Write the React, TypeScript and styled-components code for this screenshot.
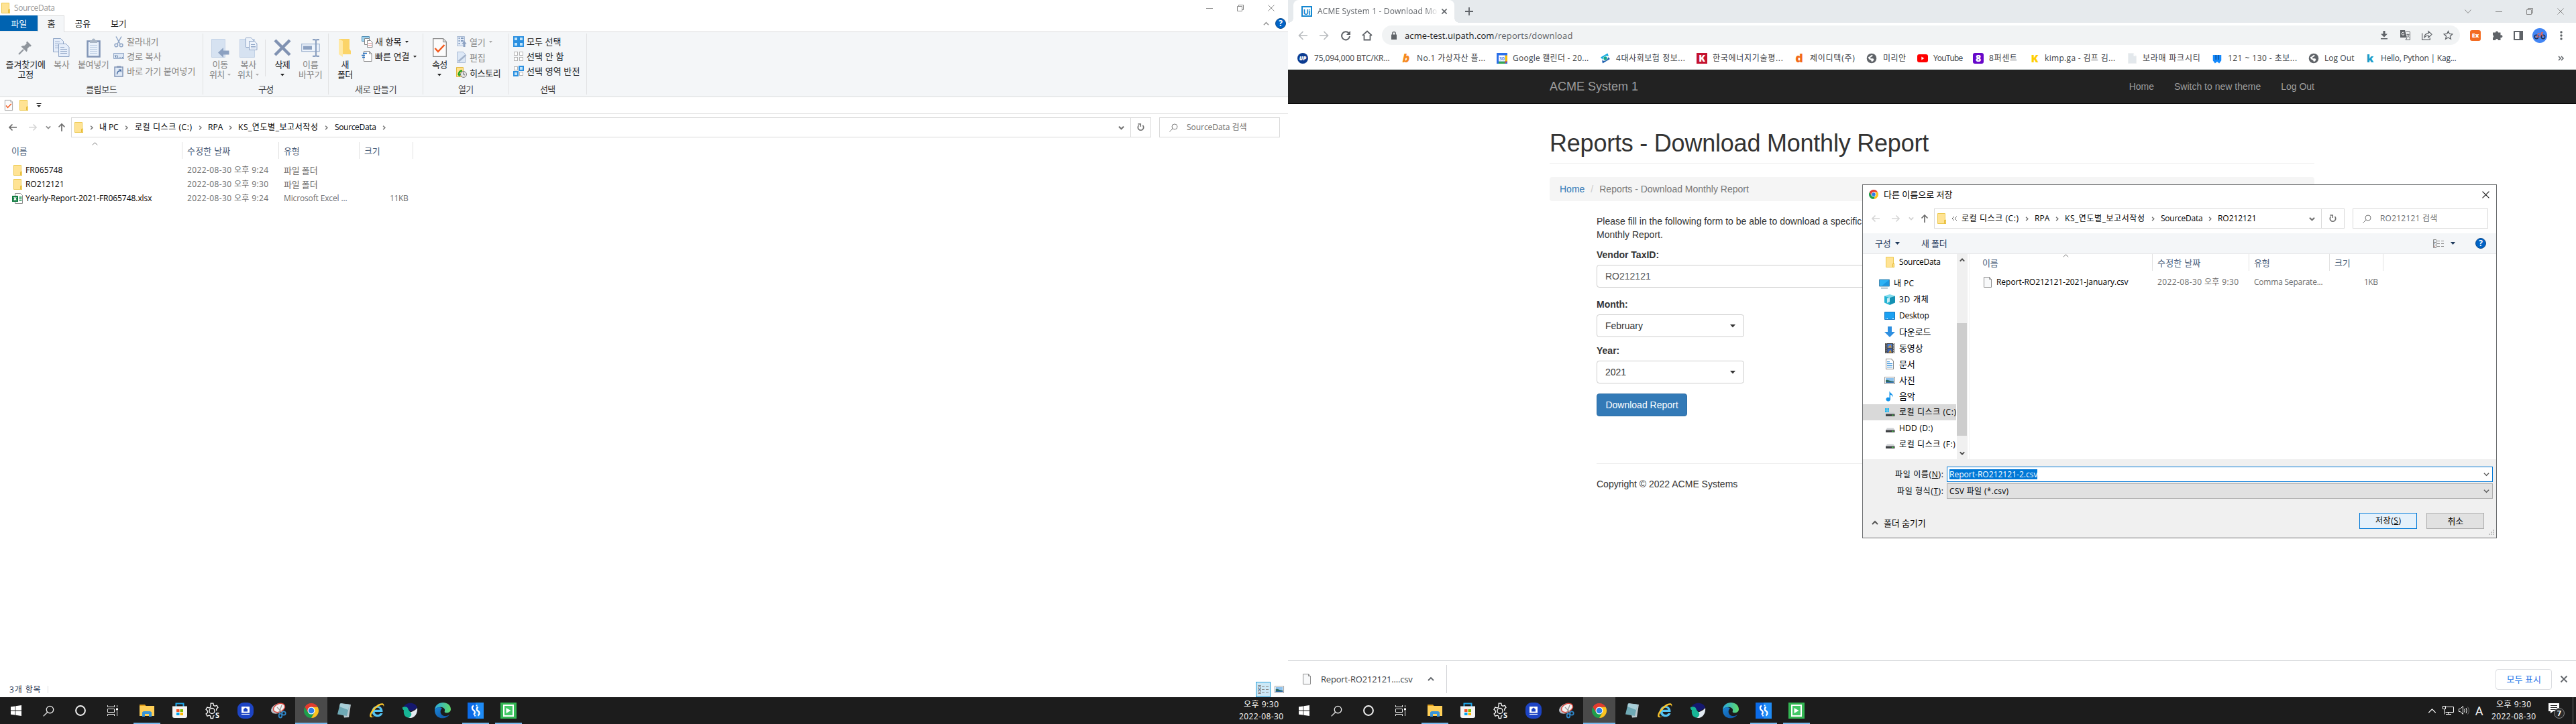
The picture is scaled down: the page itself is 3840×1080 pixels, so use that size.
import React, { useLayoutEffect, useRef, useState } from 'react';
import styled, { createGlobalStyle, css } from 'styled-components';

const GlobalStyle = createGlobalStyle`
  * { box-sizing: border-box; }
  body { margin: 0; background: #fff; overflow: hidden; }
  svg { display: block; flex: none; overflow: visible; }
`;

const UI_FONT = `'Open Sans', 'Noto Sans CJK KR', sans-serif`;
const WEB_FONT = `'Liberation Sans', Arial, sans-serif`;

/* ---------- text of a known width ---------- */

const LabelBox = styled.span<{ $w: number; $ml: number; $c?: string; $fs: number; $b?: boolean }>`
  flex: none;
  display: block;
  width: ${(p) => p.$w}px;
  margin-left: ${(p) => p.$ml}px;
  color: ${(p) => p.$c || 'inherit'};
  font-size: ${(p) => p.$fs}px;
  font-weight: ${(p) => (p.$b ? 600 : 400)};
  white-space: pre;
`;
const LabelInk = styled.span`
  display: inline-block;
  white-space: pre;
`;

type LabelProps = { w: number; ml?: number; c?: string; fs?: number; b?: boolean; children: React.ReactNode };

/** Spreads its text evenly so that it fills exactly `w` pixels. */
function Label({ w, ml = 0, c, fs, b, children }: LabelProps) {
  const ref = useRef<HTMLSpanElement>(null);
  const [spacing, setSpacing] = useState(0);
  const size = fs ?? (typeof children === 'string' && !/[A-Za-z0-9]/.test(children) ? 13 : 12);
  useLayoutEffect(() => {
    const el = ref.current!;
    const n = (el.textContent || '').length;
    el.style.letterSpacing = '0px';
    const s = (w + 0.5 - el.getBoundingClientRect().width) / n;
    el.style.letterSpacing = `${s}px`;
    setSpacing(s);
  }, [w, children]);
  return (
    <LabelBox $w={w} $ml={ml} $c={c} $fs={size} $b={b}>
      <LabelInk ref={ref} style={{ letterSpacing: spacing }}>{children}</LabelInk>
    </LabelBox>
  );
}

const Slot = styled.span<{ $w: number; $ml?: number; $mt?: number }>`
  flex: none;
  width: ${(p) => p.$w}px;
  margin-left: ${(p) => p.$ml || 0}px;
  margin-top: ${(p) => p.$mt || 0}px;
  display: flex;
  align-items: center;
  justify-content: center;
`;

/* ---------- small glyphs ---------- */

const Folder = ({ h = 16 }: { h?: number }) => (
  <svg width="13" height={h} viewBox="0 0 13 16" preserveAspectRatio="none">
    <path d="M.5.5h11v9.5h1v5.5H.5z" fill="#ffe394" stroke="#ecc94f" />
    <path d="M10.5 15.5v-5h2v5z" fill="#ffdf80" stroke="#e6bd3c" />
  </svg>
);
const Triangle = ({ c = '#222', w = 6 }: { c?: string; w?: number }) => (
  <svg width={w} height={w / 2 + 0.5} viewBox="0 0 6 3" preserveAspectRatio="none"><path d="M0 0h6L3 3z" fill={c} /></svg>
);
const Chevron = ({ dir = 'down', s = 8, c = '#777', sw = 1.6 }: { dir?: string; s?: number; c?: string; sw?: number }) => {
  const d: Record<string, string> = {
    down: 'M1 3l4 4 4-4', up: 'M1 7l4-4 4 4', right: 'M3 1l4 4-4 4',
  };
  return <svg width={s} height={s} viewBox="0 0 10 10"><path d={d[dir]} fill="none" stroke={c} strokeWidth={(sw * 10) / s} /></svg>;
};
const Arrow = ({ dir, c }: { dir: 'left' | 'right' | 'up'; c: string }) => {
  const rot = { left: 0, up: 90, right: 180 }[dir];
  return (
    <svg width="12" height="12" viewBox="0 0 12 12">
      <g transform={`rotate(${rot} 6 6)`} fill="none" stroke={c} strokeWidth="1.7"><path d="M1 6h11M5.5 1.5L1 6l4.500 4.500" /></g>
    </svg>
  );
};
const Minimize = ({ c = '#888' }) => <svg width="10" height="10" viewBox="0 0 10 10"><path d="M0 5.500h10" stroke={c} /></svg>;
const Restore = ({ c = '#888' }) => (
  <svg width="10" height="10" viewBox="0 0 10 10"><path d="M.5 2.500h7v7h-7zM2.500 2.500v-2h7v7h-2" fill="none" stroke={c} /></svg>
);
const Cross = ({ c = '#888', s = 10, sw = 1 }) => (
  <svg width={s} height={s} viewBox="0 0 10 10"><path d="M.5.5l9 9M9.500.5l-9 9" stroke={c} strokeWidth={sw} fill="none" /></svg>
);
const Help = () => (
  <svg width="16" height="16" viewBox="0 0 16 16">
    <circle cx="8" cy="8" r="7.500" fill="#0063c6" stroke="#114b88" />
    <text x="8" y="12.300" textAnchor="middle" fontFamily="Open Sans" fontWeight="700" fontSize="12" fill="#fff">?</text>
  </svg>
);
const Refresh = () => (
  <svg width="11" height="12" viewBox="0 0 11 12">
    <path d="M2.600 3A4.200 4.200 0 1 0 8.400 3" fill="none" stroke="#707070" strokeWidth="1.700" />
    <path d="M1.300 1h4v4" fill="none" stroke="#707070" strokeWidth="1.500" />
  </svg>
);
const Magnifier = ({ s = 13, c = '#777', sw = 1 }) => (
  <svg width={s} height={s} viewBox="0 0 13 13"><circle cx="8" cy="5" r="4" fill="none" stroke={c} strokeWidth={sw} /><path d="M5 8L.5 12.500" stroke={c} strokeWidth={sw} /></svg>
);
const Sheet = () => (
  <svg width="12" height="16" viewBox="0 0 12 16"><path d="M.5.5h8l3 3v12H.5z" fill="#f8f9fa" stroke="#8c8c8c" /><path d="M8.500.5v3h3" fill="none" stroke="#8c8c8c" /></svg>
);
const CheckSheet = ({ w, h }: { w: number; h: number }) => (
  <svg width={w} height={h} viewBox="0 0 21 28">
    <path d="M.7.7h15l4.600 4.600v22H.7z" fill="#fcfcfc" stroke="#8a8a8a" strokeWidth="1.300" />
    <path d="M15.500.7v5h5" fill="#ddd" stroke="#8a8a8a" />
    <path d="M3.500 15l4.500 5L17.500 10" fill="none" stroke="#f2591c" strokeWidth="2.500" />
  </svg>
);
const Details = ({ c = '#888' }) => (
  <svg width="16" height="13" viewBox="0 0 16 13">
    <path d="M.5.5h4v12h-4zM.5 4.500h4M.5 8.500h4" fill="none" stroke={c} />
    <path d="M6 2.500h4M12 2.500h4M6 6.500h4M12 6.500h4M6 10.500h4M12 10.500h4" stroke={c} />
    <path d="M2 2.500h1M2 6.500h1" stroke="#3c78c0" /><path d="M2 10.500h1" stroke="#c03c3c" />
  </svg>
);
const Picture = ({ w = 16, h = 11 }) => (
  <svg width={w} height={h} viewBox="0 0 16 11" preserveAspectRatio="none">
    <path d="M.5.5h15v10H.5z" fill="#fff" stroke="#999" /><path d="M2 2h12v7H2z" fill="#8fc3ee" />
    <path d="M2 5c4-1 6 2 12 2v2H2z" fill="#2f6a63" /><path d="M2 8h12v1H2z" fill="#2d6aa8" />
  </svg>
);
const ChromeLogo = ({ s, h = s }: { s: number; h?: number }) => (
  <svg width={s} height={h} viewBox="0 0 48 48">
    <path d="M13.600 30L3.200 12A24 24 0 0 0 24 48l10.400-18z" fill="#1e9e4a" />
    <path d="M34.400 30L24 48A24 24 0 0 0 44.800 12H24z" fill="#fcc31e" />
    <path d="M13.600 30L3.200 12a24 24 0 0 1 41.600 0H24z" fill="#e33b2e" />
    <circle cx="24" cy="24" r="12" fill="#fff" /><circle cx="24" cy="24" r="9.500" fill="#2b7de9" />
  </svg>
);

/* ---------- ribbon icons ---------- */

const BLUE = '#8fa5c6';
const Pin = () => (
  <svg width="22" height="22" viewBox="0 0 22 22">
    <path d="M13.500 1.500l6.500 6.500-1.500 1.500-1.500-.3-3.300 3.500c.4 2-.1 3.600-1.200 4.600L4.500 9.500c1.500-1.300 3-1.600 4.700-1.200L12.700 5l-.5-2z" fill="#8f959c" />
    <path d="M8 14L1 21" stroke="#8f959c" strokeWidth="2.200" />
  </svg>
);
const SheetPair = () => (
  <svg width="25" height="28" viewBox="0 0 25 28" fill="#e6eefa" stroke={BLUE}>
    <path d="M.5.5h11l4 4v16H.5z" /><path d="M3 5.500h7M3 8.500h9M3 11.500h9M3 14.500h9" />
    <path d="M8.500 8.500h11l4.500 4.500v14.500H8.500z" /><path d="M11 13.500h6M11 16.500h10M11 19.500h10M11 22.500h10" />
  </svg>
);
const Clipboard = () => (
  <svg width="21" height="29" viewBox="0 0 21 29">
    <path d="M1.500 4.500h18v23h-18z" fill="#e9f1fb" stroke="#8195b6" strokeWidth="2.500" />
    <path d="M5 3h3a2.500 2.500 0 0 1 5 0h3v4H5z" fill="#a9b6c6" />
    <path d="M5 10.500h11M5 13.500h11M5 16.500h11M5 19.500h11M5 22.500h11" stroke="#b9cbe2" />
  </svg>
);
const Scissors = () => (
  <svg width="14" height="17" viewBox="0 0 14 17" fill="none" stroke="#8fa5c6" strokeWidth="1.500">
    <path d="M3 .5l6 11M11 .5l-6 11" /><circle cx="3.300" cy="13.500" r="2.300" /><circle cx="10.700" cy="13.500" r="2.300" />
  </svg>
);
const PathIcon = () => (
  <svg width="16" height="10" viewBox="0 0 16 10"><path d="M.5.5h15v8h-15z" fill="#dfe9f6" stroke={BLUE} /><path d="M2.500 3l1.500 4M5 3l1.500 4M8 6.500h1M10.500 6.500h1M13 6.500h1" stroke="#46658f" /></svg>
);
const ShortcutIcon = () => (
  <svg width="14" height="17" viewBox="0 0 14 17"><path d="M1 2h12v14H1z" fill="#dfe9f6" stroke="#8195b6" strokeWidth="1.500" /><path d="M4 .5h6v2.500H4z" fill="#8195b6" /><path d="M4.500 13c0-4 1.500-5 4-5" fill="none" stroke="#4a6da0" strokeWidth="1.500" /><path d="M6.500 5.500H11V10z" fill="#4a6da0" /></svg>
);
const MoveTo = () => (
  <svg width="27" height="29" viewBox="0 0 27 29"><path d="M.5 1.500h20v27h-20z" fill="#d6e2f1" stroke="#c3d2e6" /><path d="M10 21.500l8-7.500v4.500h8.500v6H18V29z" fill="#8ca1c1" /></svg>
);
const CopyTo = () => (
  <svg width="27" height="30" viewBox="0 0 27 30"><path d="M.5 2.500h22v27H.5z" fill="#d6e2f1" stroke="#c3d2e6" /><g fill="#edf3fb" stroke={BLUE}><path d="M9.500.5h8l3 3v11h-11z" /><path d="M14.500 5.500h8l3.500 3.500v9.500H14.500z" /><path d="M17 10.500h6M17 13.500h7M17 15.500h7" /></g></svg>
);
const DeleteIcon = () => (
  <svg width="26" height="26" viewBox="0 0 26 26"><path d="M2 2l22 22M24 2L2 24" stroke="#8092b2" strokeWidth="4.500" /></svg>
);
const Rename = () => (
  <svg width="28" height="27" viewBox="0 0 28 27"><path d="M.7 7.700h26.500v11H.7z" fill="#eef4fc" stroke="#a5b8d3" strokeWidth="1.300" /><path d="M3 10.500h13v5.500H3z" fill="#8ca1c1" /><path d="M17 1.200h3.500l1.500 1 1.500-1H27M22 2v23M17 25.800h3.500l1.500-1 1.500 1H27" stroke="#8ca1c1" strokeWidth="2.200" fill="none" /></svg>
);
const BigFolder = () => (
  <svg width="20" height="28" viewBox="0 0 20 28"><path d="M1 1h16v15l2 3v5H1z" fill="#fbd468" /><path d="M1 1l6 3v24L1 24z" fill="#ffe9a6" /></svg>
);
const NewItem = () => (
  <svg width="17" height="17" viewBox="0 0 17 17"><path d="M.5.5h11v7H.5z" fill="#9fd3ee" stroke="#4d8bb3" /><path d="M4.500 3.500h7v9h-7z" fill="#fff" stroke="#888" /><path d="M8.500 6.500h5l2.500 2.500v7.500H8.500z" fill="#fff" stroke="#888" /><path d="M10 10.500h5M10 13.500h5" stroke="#e08f8f" /></svg>
);
const EasyAccess = () => (
  <svg width="16" height="16" viewBox="0 0 16 16"><path d="M3.500.5h8l3.500 3.500v11.500H3.500z" fill="#fff" stroke="#888" /><path d="M11.500.5v3.500H15" fill="none" stroke="#888" /><path d="M2 3.500h6M0 6.500h5M1 9.500h4" stroke="#1e6cc0" strokeWidth="1.400" /></svg>
);
const OpenIcon = () => (
  <svg width="15" height="17" viewBox="0 0 15 17"><path d="M.5.5h11v14H.5z" fill="#e3ecf8" stroke="#a9bad3" /><path d="M2.500 3h2M2.500 7h2M2.500 11h2M6 3h4M6 7h4" stroke="#7f97bb" strokeWidth="1.800" /><path d="M11 7l3.700 4.500H12.500V16h-3v-4.500H7.300z" fill="#8ca1c1" /></svg>
);
const EditIcon = () => (
  <svg width="15" height="17" viewBox="0 0 15 17"><path d="M.5.5h9l3 3v13H.5z" fill="#dde8f6" stroke="#a9bad3" /><path d="M2.500 14.500L13.500 5" stroke="#a3b3cb" strokeWidth="2.500" /></svg>
);
const HistoryIcon = () => (
  <svg width="16" height="17" viewBox="0 0 16 17"><path d="M.5.5h10v14H.5z" fill="#ffe08a" stroke="#e0b942" /><circle cx="11" cy="11" r="4.500" fill="#e6e6e6" stroke="#7d7d7d" /><path d="M11 8v3l2 1" stroke="#555" fill="none" /><path d="M9 5.500a5 5 0 0 0-5 6" fill="none" stroke="#1fa31f" strokeWidth="2.500" /><path d="M2 10.500h5l-2.500 4z" fill="#1fa31f" /></svg>
);
const Tiles = ({ on }: { on: number[] }) => {
  const at = [[0, 0], [8, 0], [0, 8], [8, 8]];
  return (
    <svg width="16" height="16" viewBox="0 0 16 16">
      {at.map(([x, y], i) => on.includes(i)
        ? <rect key={i} x={x + 1} y={y + 1} width="6" height="6" fill="#c0e4fb" stroke="#2b90e0" strokeWidth="2" />
        : <rect key={i} x={x + 1.5} y={y + 1.5} width="5" height="5" fill="#fff" stroke="#b3b3b3" />)}
    </svg>
  );
};

/* ---------- file explorer ---------- */

const Screen = styled.div`
  display: flex;
  width: 3840px;
  height: 1080px;
  overflow: hidden;
  font-family: ${UI_FONT};
  font-size: 12px;
  line-height: 16px;
  color: #222;
`;
const Monitor = styled.div`
  position: relative;
  width: 1920px;
  height: 1080px;
  display: flex;
  flex-direction: column;
`;
const Window = styled.div`
  height: 1040px;
  display: flex;
  flex-direction: column;
  background: #fff;
`;
const Row = styled.div<{ $h: number; $pl?: number; $bg?: string }>`
  flex: none;
  display: flex;
  align-items: center;
  height: ${(p) => p.$h}px;
  padding-left: ${(p) => p.$pl || 0}px;
  background: ${(p) => p.$bg || 'transparent'};
`;
const Grow = styled.div`flex: 1;`;
const CaptionButtons = styled.div<{ $gap: number; $pr: number }>`
  margin-left: auto;
  padding-right: ${(p) => p.$pr}px;
  display: flex;
  gap: ${(p) => p.$gap}px;
`;
const RibbonTabs = styled.div`
  flex: none;
  display: flex;
  height: 25px;
  border-bottom: 1px solid #dadbdc;
`;
const RibbonTab = styled.div<{ $w: number; $kind?: 'file' | 'active' }>`
  width: ${(p) => p.$w}px;
  height: 23px;
  display: flex;
  align-items: center;
  justify-content: center;
  ${(p) => p.$kind === 'file' && css`background: #0063b1; color: #fff;`}
  ${(p) => p.$kind === 'active' && css`
    height: 25px;
    padding-bottom: 2px;
    background: #f4f6f8;
    border: 1px solid #dadbdc;
    border-bottom: 0;
  `}
`;
const TabTail = styled.div`
  margin-left: auto;
  display: flex;
  align-items: center;
  gap: 9px;
  padding-right: 3px;
`;
const Ribbon = styled.div`
  flex: none;
  display: flex;
  height: 97px;
  padding: 2px 0 3px;
  background: #f4f6f8;
  border-bottom: 1px solid #dadbdc;
`;
const Group = styled.div<{ $w: number }>`
  width: ${(p) => p.$w}px;
  display: flex;
  flex-direction: column;
  border-right: 1px solid #e1e2e3;
`;
const GroupBody = styled.div<{ $pl: number }>`
  display: flex;
  height: 75px;
  padding-left: ${(p) => p.$pl}px;
`;
const GroupName = styled.div`
  display: flex;
  justify-content: center;
  height: 16px;
  color: #444;
`;
const BigButton = styled.div<{ $w: number; $off?: boolean }>`
  flex: none;
  width: ${(p) => p.$w}px;
  padding-top: 7px;
  display: flex;
  flex-direction: column;
  align-items: center;
  line-height: 15px;
  color: ${(p) => (p.$off ? '#838383' : '#222')};
`;
const BigIcon = styled.div`
  height: 28px;
  margin-bottom: 4px;
  display: flex;
  align-items: center;
`;
const LineWithArrow = styled.div`
  display: flex;
  align-items: center;
  height: 15px;
  gap: 5px;
`;
const SmallStack = styled.div<{ $ml: number; $pitch: number }>`
  margin-left: ${(p) => p.$ml}px;
  display: grid;
  grid-auto-rows: ${(p) => p.$pitch}px;
  align-content: start;
  padding-top: 1px;
`;
const SmallButton = styled.div<{ $off?: boolean }>`
  display: flex;
  align-items: center;
  gap: 4px;
  color: ${(p) => (p.$off ? '#838383' : '#222')};
`;
const Divider = styled.div<{ $h: number; $mt?: number; $ml?: number; $mr?: number; $c?: string }>`
  flex: none;
  width: 1px;
  height: ${(p) => p.$h}px;
  margin: ${(p) => p.$mt || 0}px ${(p) => p.$mr || 0}px 0 ${(p) => p.$ml || 0}px;
  background: ${(p) => p.$c || '#dfe0e2'};
`;

const Small = ({ icon, text, w, arrow, off }: { icon: React.ReactNode; text: string; w: number; arrow?: boolean; off?: boolean }) => (
  <SmallButton $off={off}>
    <Slot $w={16}>{icon}</Slot>
    <Label w={w}>{text}</Label>
    {arrow && <Slot $w={8}><Triangle c={off ? '#a8a8a8' : '#222'} w={5} /></Slot>}
  </SmallButton>
);

/* address bar, shared by the explorer and the save dialog */

const PathBox = styled.div<{ $w: number; $h: number }>`
  flex: none;
  width: ${(p) => p.$w}px;
  height: ${(p) => p.$h}px;
  margin-left: 8px;
  padding-left: 4px;
  display: flex;
  align-items: center;
  border: 1px solid #d9d9d9;
  color: #000;
`;
const ReloadCell = styled.div<{ $w: number }>`
  width: ${(p) => p.$w}px;
  align-self: stretch;
  display: flex;
  align-items: center;
  justify-content: center;
  border-left: 1px solid #d9d9d9;
`;
const SearchBox = styled.div<{ $w: number; $h: number }>`
  flex: none;
  width: ${(p) => p.$w}px;
  height: ${(p) => p.$h}px;
  margin-left: 12px;
  padding-left: 14px;
  display: flex;
  align-items: center;
  border: 1px solid #d9d9d9;
`;

type Crumb = [string, number, number];
type AddressProps = {
  h: number; boxW: number; boxH: number; crumbs: Crumb[]; elided?: boolean; reloadW: number;
  searchW: number; search: string; searchTextW: number; dim?: boolean;
};
const AddressBar = (p: AddressProps) => (
  <Row $h={p.h} $pl={13}>
    <Arrow dir="left" c={p.dim ? '#d6d6d6' : '#6b6b6b'} />
    <Slot $w={12} $ml={18}><Arrow dir="right" c="#d6d6d6" /></Slot>
    <Slot $w={8} $ml={13}><Chevron s={8} c={p.dim ? '#d0d0d0' : '#8a8a8a'} /></Slot>
    <Slot $w={12} $ml={10}><Arrow dir="up" c="#6b6b6b" /></Slot>
    <PathBox $w={p.boxW} $h={p.boxH}>
      <Folder />
      {p.crumbs.map(([text, w, gap], i) => (
        <React.Fragment key={text}>
          <Slot $w={gap}>
            {i === 0 && p.elided
              ? <svg width="8" height="8" viewBox="0 0 8 8"><path d="M4 1L1 4l3 3M8 1L5 4l3 3" fill="none" stroke="#666" /></svg>
              : <Chevron dir="right" s={7} c="#6f6f6f" sw={1.4} />}
          </Slot>
          <Label w={w}>{text}</Label>
        </React.Fragment>
      ))}
      {!p.elided && <Slot $w={24}><Chevron dir="right" s={7} c="#6f6f6f" sw={1.4} /></Slot>}
      <Grow />
      <Slot $w={28}><Chevron s={9} c="#707070" sw={2} /></Slot>
      <ReloadCell $w={p.reloadW}><Refresh /></ReloadCell>
    </PathBox>
    <SearchBox $w={p.searchW} $h={p.boxH}>
      <Magnifier />
      <Label w={p.searchTextW} ml={13} c="#6d6d6d">{p.search}</Label>
    </SearchBox>
  </Row>
);

const HeaderRow = styled.div<{ $h: number; $mt?: number }>`
  flex: none;
  display: flex;
  align-items: center;
  height: ${(p) => p.$h}px;
  margin-top: ${(p) => p.$mt || 0}px;
  color: #4c607a;
`;
const HeaderCell = styled.div<{ $w: number; $pl: number }>`
  position: relative;
  flex: none;
  width: ${(p) => p.$w}px;
  height: 100%;
  padding-left: ${(p) => p.$pl}px;
  display: flex;
  align-items: center;
  border-right: 1px solid #e2e2e2;
`;
const SortMark = styled.div<{ $x: number }>`
  position: absolute;
  top: -2px;
  left: ${(p) => p.$x}px;
`;
const FileRow = styled.div`
  flex: none;
  display: flex;
  align-items: center;
  height: 21px;
  color: #6d6d6d;
`;
const Cell = styled.div<{ $w: number; $pl?: number; $right?: boolean }>`
  flex: none;
  width: ${(p) => p.$w}px;
  padding-left: ${(p) => p.$pl || 0}px;
  display: flex;
  align-items: center;
  justify-content: ${(p) => (p.$right ? 'flex-end' : 'flex-start')};
`;
const ViewToggle = styled.div`
  width: 22px;
  height: 23px;
  display: flex;
  align-items: center;
  justify-content: center;
  background: #cce8f6;
  border: 1px solid #26a0da;
`;
const Excel = () => (
  <svg width="16" height="16" viewBox="0 0 16 16"><path d="M4.500.5h8l3 3v12h-11z" fill="#fff" stroke="#8c8c8c" /><path d="M10.500 6h4M10.500 8.500h4M10.500 11h4" stroke="#2f9b61" strokeWidth="1.300" /><path d="M0 4h9v9H0z" fill="#107c41" /><path d="M2.700 6.200l3.600 4.600M6.300 6.200l-3.600 4.600" stroke="#fff" strokeWidth="1.400" /></svg>
);

function Explorer() {
  return (
    <Window>
      <Row $h={23} $pl={2}>
        <Folder />
        <Label w={60} ml={6} c="#999">SourceData</Label>
        <CaptionButtons $gap={36} $pr={20}><Minimize /><Restore /><Cross /></CaptionButtons>
      </Row>
      <RibbonTabs>
        <RibbonTab $w={56} $kind="file"><Label w={23}>파일</Label></RibbonTab>
        <RibbonTab $w={40} $kind="active"><Label w={11}>홈</Label></RibbonTab>
        <RibbonTab $w={54}><Label w={23}>공유</Label></RibbonTab>
        <RibbonTab $w={53}><Label w={23}>보기</Label></RibbonTab>
        <TabTail><Chevron dir="up" s={9} c="#999" /><Help /></TabTail>
      </RibbonTabs>
      <Ribbon>
        <Group $w={303}>
          <GroupBody $pl={5}>
            <BigButton $w={66}><BigIcon><Pin /></BigIcon><Label w={59}>즐겨찾기에</Label><Label w={23}>고정</Label></BigButton>
            <BigButton $w={41} $off><BigIcon><SheetPair /></BigIcon><Label w={23}>복사</Label></BigButton>
            <BigButton $w={54} $off><BigIcon><Clipboard /></BigIcon><Label w={46}>붙여넣기</Label></BigButton>
            <SmallStack $ml={3} $pitch={22}>
              <Small off icon={<Scissors />} text="잘라내기" w={47} />
              <Small off icon={<PathIcon />} text="경로 복사" w={51} />
              <Small off icon={<ShortcutIcon />} text="바로 가기 붙여넣기" w={102} />
            </SmallStack>
          </GroupBody>
          <GroupName><Label w={46}>클립보드</Label></GroupName>
        </Group>
        <Group $w={187}>
          <GroupBody $pl={4}>
            <BigButton $w={42} $off><BigIcon><MoveTo /></BigIcon><Label w={23}>이동</Label><LineWithArrow><Label w={22}>위치</Label><Triangle c="#aaa" w={5} /></LineWithArrow></BigButton>
            <BigButton $w={42} $off><BigIcon><CopyTo /></BigIcon><Label w={23}>복사</Label><LineWithArrow><Label w={22}>위치</Label><Triangle c="#aaa" w={5} /></LineWithArrow></BigButton>
            <Divider $h={55} $mt={9} $ml={4} $mr={4} />
            <BigButton $w={41}><BigIcon><DeleteIcon /></BigIcon><Label w={22}>삭제</Label><LineWithArrow><Triangle w={6} /></LineWithArrow></BigButton>
            <BigButton $w={43} $off><BigIcon><Rename /></BigIcon><Label w={23}>이름</Label><Label w={35}>바꾸기</Label></BigButton>
          </GroupBody>
          <GroupName><Label w={22}>구성</Label></GroupName>
        </Group>
        <Group $w={141}>
          <GroupBody $pl={4}>
            <BigButton $w={40}><BigIcon><BigFolder /></BigIcon><Label w={11}>새</Label><Label w={22}>폴더</Label></BigButton>
            <SmallStack $ml={5} $pitch={22}>
              <Small icon={<NewItem />} text="새 항목" w={39} arrow />
              <Small icon={<EasyAccess />} text="빠른 연결" w={51} arrow />
            </SmallStack>
          </GroupBody>
          <GroupName><Label w={62}>새로 만들기</Label></GroupName>
        </Group>
        <Group $w={127}>
          <GroupBody $pl={4}>
            <BigButton $w={40}><BigIcon><CheckSheet w={21} h={28} /></BigIcon><Label w={22}>속성</Label><LineWithArrow><Triangle w={6} /></LineWithArrow></BigButton>
            <SmallStack $ml={5} $pitch={23}>
              <Small off icon={<OpenIcon />} text="열기" w={23} arrow />
              <Small off icon={<EditIcon />} text="편집" w={23} />
              <Small icon={<HistoryIcon />} text="히스토리" w={46} />
            </SmallStack>
          </GroupBody>
          <GroupName><Label w={22}>열기</Label></GroupName>
        </Group>
        <Group $w={117}>
          <GroupBody $pl={7}>
            <SmallStack $ml={0} $pitch={22}>
              <Small icon={<Tiles on={[0, 1, 2, 3]} />} text="모두 선택" w={51} />
              <Small icon={<Tiles on={[]} />} text="선택 안 함" w={55} />
              <Small icon={<Tiles on={[1, 2]} />} text="선택 영역 반전" w={79} />
            </SmallStack>
          </GroupBody>
          <GroupName><Label w={22}>선택</Label></GroupName>
        </Group>
      </Ribbon>
      <Row $h={24} $pl={7}>
        <CheckSheet w={12} h={16} />
        <Slot $w={13} $ml={10}><Folder /></Slot>
        <Slot $w={8} $ml={12}><svg width="8" height="6" viewBox="0 0 8 6"><path d="M.5.5h7" stroke="#222" /><path d="M1 3h6L4 6z" fill="#222" /></svg></Slot>
      </Row>
      <Row $h={1} $bg="#e5e5e5" />
      <AddressBar
        h={40} boxW={1610} boxH={30} reloadW={30}
        crumbs={[['내 PC', 28, 24], ['로컬 디스크 (C:)', 85, 25], ['RPA', 22, 24], ['KS_연도별_보고서작성', 119, 23], ['SourceData', 61, 25]]}
        searchW={180} search="SourceData 검색" searchTextW={89}
      />
      <HeaderRow $h={25} $mt={2}>
        <HeaderCell $w={272} $pl={17}><SortMark $x={137}><Chevron dir="up" s={9} sw={1} /></SortMark><Label w={23}>이름</Label></HeaderCell>
        <HeaderCell $w={144} $pl={7}><Label w={64}>수정한 날짜</Label></HeaderCell>
        <HeaderCell $w={120} $pl={7}><Label w={23}>유형</Label></HeaderCell>
        <HeaderCell $w={80} $pl={7}><Label w={23}>크기</Label></HeaderCell>
      </HeaderRow>
      <Row $h={6} />
      <FileRow>
        <Cell $w={279} $pl={20}><Folder /><Label w={55} ml={5} c="#000">FR065748</Label></Cell>
        <Cell $w={144}><Label w={121}>2022-08-30 오후 9:24</Label></Cell>
        <Label w={50}>파일 폴더</Label>
      </FileRow>
      <FileRow>
        <Cell $w={279} $pl={20}><Folder /><Label w={57} ml={5} c="#000">RO212121</Label></Cell>
        <Cell $w={144}><Label w={121}>2022-08-30 오후 9:30</Label></Cell>
        <Label w={50}>파일 폴더</Label>
      </FileRow>
      <FileRow>
        <Cell $w={279} $pl={18}><Excel /><Label w={188} ml={4} c="#000">Yearly-Report-2021-FR065748.xlsx</Label></Cell>
        <Cell $w={144}><Label w={121}>2022-08-30 오후 9:24</Label></Cell>
        <Cell $w={120}><Label w={94}>Microsoft Excel ...</Label></Cell>
        <Cell $w={65} $right><Label w={27}>11KB</Label></Cell>
      </FileRow>
      <Grow />
      <Row $h={23} $pl={14}>
        <Label w={47} c="#1e395b" fs={12}>3개 항목</Label>
        <Divider $h={11} $ml={10} />
        <Grow />
        <ViewToggle><Details /></ViewToggle>
        <Slot $w={26}><Picture w={14} /></Slot>
      </Row>
    </Window>
  );
}

/* ---------- taskbar ---------- */

const Bar = styled.div`
  flex: none;
  display: flex;
  height: 40px;
  background: #1c1c1c;
  color: #fff;
`;
const TaskCell = styled.div<{ $gap?: number; $run?: boolean; $active?: boolean }>`
  position: relative;
  flex: none;
  width: 48px;
  height: 40px;
  margin-left: ${(p) => p.$gap || 0}px;
  display: flex;
  align-items: center;
  justify-content: center;
  background: ${(p) => (p.$active ? '#4a4a4a' : 'transparent')};
  ${(p) => p.$run && css`
    &::after {
      content: '';
      position: absolute;
      bottom: 0;
      left: ${p.$active ? 0 : 4}px;
      right: ${p.$active ? 0 : 4}px;
      height: 2px;
      background: #76b9ed;
    }
  `}
`;
const Clock = styled.div<{ $pr: number }>`
  margin-right: ${(p) => p.$pr}px;
  display: flex;
  flex-direction: column;
  align-items: center;
  line-height: 18px;
`;
const TrayRow = styled.div`
  margin-left: auto;
  display: flex;
  align-items: center;
`;

const WinLogo = () => <svg width="16" height="16" viewBox="0 0 16 16"><path d="M0 2.300l6.500-.9v6.200H0zM7.300 1.300L16 0v7.600H7.300zM0 8.400h6.500v6.200L0 13.700zM7.300 8.400H16V16l-8.700-1.200z" fill="#fff" /></svg>;
const TaskView = () => (
  <svg width="17" height="16" viewBox="0 0 17 16" fill="none" stroke="#eee"><path d="M.5 0v2.500h10V0M.5 5.500h10v5H.5zM.5 16v-2.500h10V16M14.500 0v3M14.500 9v7" /><path d="M13 4.500h3v3h-3z" fill="#fff" stroke="none" /></svg>
);
const TaskFolder = () => (
  <svg width="22" height="18" viewBox="0 0 22 18"><path d="M0 0h8l2 2.500H0z" fill="#e4a11b" /><path d="M0 2h22v15H0z" fill="#ffcf57" /><path d="M4 18v-6.500l2-1.500h10l2 1.500V18h-4v-4H8v4z" fill="#3a95d9" /></svg>
);
const Store = () => (
  <svg width="24" height="24" viewBox="0 0 24 24"><path d="M6.500 6V1.500h11V6" fill="none" stroke="#1fa7ea" strokeWidth="2" /><path d="M1 5.500h22V20a3 3 0 0 1-3 3H4a3 3 0 0 1-3-3z" fill="#f4f4f4" /><path d="M7 10h4.500v4H7z" fill="#f25022" /><path d="M12.500 10H17v4h-4.500z" fill="#7fba00" /><path d="M7 15h4.500v4H7z" fill="#00a4ef" /><path d="M12.500 15H17v4h-4.500z" fill="#ffb900" /></svg>
);
const Gear = () => (
  <svg width="24" height="25" viewBox="0 0 24 25" fill="none" stroke="#fff" strokeWidth="1.300">
    <path d="M14.500 19.500l-1.500.5-.5 3.500H9.200L8.500 20 7 19.200l-3 1-1.900-3.200L4.500 15v-2.500L2 10.300l1.900-3.200 3.100 1 1.500-.9L9.200 4V1.200h3.600l.7 3.200 1.700.9 3-1 1.800 3-2.300 2.200v2.500" />
    <circle cx="11" cy="12.500" r="4" />
    <text x="16" y="23" fontFamily="Open Sans" fontSize="11" fontWeight="700" fill="#fff" stroke="none">S</text>
  </svg>
);
const BlueApp = () => <svg width="24" height="24" viewBox="0 0 24 24"><rect width="24" height="24" rx="9" fill="#1d44c4" /><path d="M6 6h12v9.500H6zM6 17h12v1H6z" fill="#fff" /><path d="M12 7.500l3 2.500v3.500H9V10z" fill="#1d44c4" /></svg>;
const Snip = () => (
  <svg width="25" height="24" viewBox="0 0 25 24"><ellipse cx="11" cy="9" rx="10.500" ry="7" transform="rotate(-25 11 9)" fill="#b9bdc4" /><ellipse cx="13" cy="8" rx="9" ry="6" transform="rotate(-25 13 8)" fill="#f3f3f3" stroke="#d9453c" strokeWidth="1.500" /><path d="M10 7l8 8M17 4l-4 11" stroke="#999" strokeWidth="1.300" /><circle cx="20" cy="16" r="2.700" fill="none" stroke="#2f86c9" strokeWidth="1.800" /><ellipse cx="15" cy="19.500" rx="2.300" ry="3" fill="none" stroke="#2f86c9" strokeWidth="1.800" /></svg>
);
const Notepad = () => <svg width="24" height="24" viewBox="0 0 24 24"><path d="M7 1l15 2-3 19-7 .5z" fill="#b9c6cc" /><path d="M6 1.500l14 1.500-4 17L2 17.500z" fill="#6fa9b5" /><path d="M6 1.500l14 1.500-2 8L5 6z" fill="#a9cfd8" /></svg>;
const IE = () => (
  <svg width="24" height="24" viewBox="0 0 24 24"><path d="M20.500 14H8.500c.3 4.500 6.500 5.300 8 2h4c-2.500 8-16 7-16-3 0-10.500 16.500-11 16 1zM8.600 10.800h7.800c-.4-4-7.200-4-7.800 0z" fill="#55c3f3" /><path d="M2.500 22C-2 20 6 6 15.500 2 21 0 23.500 2 22 6.500c0-4-3-3.500-6-2C9 8.500 1.500 18 4 20.500c1 1 3 .3 4.500-.5-2 1.700-4.500 2.500-6 2z" fill="#fbc62d" /></svg>
);
const Whale = () => (
  <svg width="24" height="24" viewBox="0 0 24 24">
    <path d="M3 7C4-1 21-2 23 8l-9 5z" fill="#15186e" />
    <path d="M23 8c1 8-4 15.500-11 15-6-1-3-6 0-8 4-2 8-3 11-7z" fill="#e3ebf2" />
    <path d="M1 7c3-1.500 7-1 8 1.500 1.500 4.500 4 5 5 7.500 1 3-1 5-3 6.500-6 .5-9-5-8-11C1.500 10.500.5 9 1 7z" fill="#17b596" />
  </svg>
);
const Edge = () => (
  <svg width="24" height="24" viewBox="0 0 24 24">
    <defs>
      <linearGradient id="edgeTop" x1="0" x2="1"><stop offset="0" stopColor="#2aa7e0" /><stop offset="1" stopColor="#5fdc6a" /></linearGradient>
      <linearGradient id="edgeLow" x1="0" x2="1" y2="1"><stop offset="0" stopColor="#1a86d8" /><stop offset="1" stopColor="#0f4f9e" /></linearGradient>
    </defs>
    <path d="M0 11C1-4 24-3 24 10c0 5-6 6.500-9 4.500-1-.8.5-1.500 0-4C14 6 4 5 0 11z" fill="url(#edgeTop)" />
    <path d="M0 11c3-5 9-5 11-2-4 2-3 10 3 11 3 .4 6-.5 8-2-5 8-22 8-22-7z" fill="url(#edgeLow)" />
  </svg>
);
const Studio = () => (
  <svg width="24" height="24" viewBox="0 0 24 24">
    <path d="M0 0h24v24H0z" fill="#0b6be8" /><path d="M12 0h12v24H12z" fill="#1e8bf5" />
    <path d="M9 4.500c-3 2-2.500 5.500 0 7s2.500 4.500 0 6.500M15.500 6.500c-2.500 2-2.500 4.500 0 6s3 5 0 7" fill="none" stroke="#fff" strokeWidth="2.300" />
    <path d="M12.500 4.500h2M10 19.500h2" stroke="#fff" strokeWidth="2" />
  </svg>
);
const Assistant = () => <svg width="24" height="24" viewBox="0 0 24 24"><path d="M0 0h24v24H0z" fill="#33b653" /><path d="M5 4h14v16H5z" fill="#42c966" stroke="#fff" strokeWidth="2" /><path d="M8.500 8l7 4-7 4z" fill="#fff" /></svg>;

const PINNED: { icon: React.ReactNode; run?: boolean; active?: boolean }[] = [
  { icon: <TaskFolder />, run: true }, { icon: <Store /> }, { icon: <Gear /> }, { icon: <BlueApp /> }, { icon: <Snip /> },
  { icon: <ChromeLogo s={22} />, run: true, active: true }, { icon: <Notepad /> }, { icon: <IE /> }, { icon: <Whale /> },
  { icon: <Edge /> }, { icon: <Studio />, run: true }, { icon: <Assistant />, run: true },
];

const Taskbar = ({ tray }: { tray?: boolean }) => (
  <Bar>
    <TaskCell><WinLogo /></TaskCell>
    <TaskCell><Magnifier s={17} c="#eee" /></TaskCell>
    <TaskCell><svg width="16" height="16" viewBox="0 0 16 16"><circle cx="8" cy="8" r="6.900" fill="none" stroke="#f2f2f2" strokeWidth="2" /></svg></TaskCell>
    <TaskCell><TaskView /></TaskCell>
    {PINNED.map((p, i) => <TaskCell key={i} $gap={i ? 1 : 3} $run={p.run} $active={p.active}>{p.icon}</TaskCell>)}
    <TrayRow>
      {tray && (
        <>
          <Slot $w={12}><Chevron dir="up" s={13} c="#fff" sw={1.3} /></Slot>
          <Slot $w={17} $ml={10}>
            <svg width="17" height="14" viewBox="0 0 17 14" fill="none" stroke="#fff"><path d="M4 1.500h12.500v8H4.500M8.500 9.500v3M5 12.500h8M.5.5h4v4h-4zM2.500 4.500v8" /></svg>
          </Slot>
          <Slot $w={17} $ml={7}>
            <svg width="17" height="14" viewBox="0 0 17 14" fill="none" stroke="#fff"><path d="M.5 4.500h2l4-4v12l-4-4h-2zM8.500 4.500q1.500 2.500 0 5M11 3q2.500 4 0 8" /><path d="M13.500 1.500q4 5.500 0 11" stroke="#777" /></svg>
          </Slot>
          <Label w={12} ml={8} fs={18}>A</Label>
          <Slot $w={12} />
        </>
      )}
      <Clock $pr={tray ? 18 : 7}><Label w={52}>오후 9:30</Label><Label w={66}>2022-08-30</Label></Clock>
      {tray && (
        <>
          <Slot $w={26}>
            <svg width="26" height="26" viewBox="0 0 26 26">
              <path d="M1 2h16v12H8l-4 3v-3H1z" fill="#fff" /><path d="M4 5.500h10M4 8.500h10M4 11.500h8" stroke="#1c1c1c" />
              <circle cx="17" cy="17" r="7.500" fill="#2a2a2a" stroke="#888" />
              <text x="17" y="21" textAnchor="middle" fontFamily="Open Sans" fontWeight="700" fontSize="11" fill="#fff">7</text>
            </svg>
          </Slot>
          <Divider $h={40} $ml={11} $mr={4} $c="#6a6a6a" />
        </>
      )}
    </TrayRow>
  </Bar>
);

/* ---------- browser ---------- */

const TabStrip = styled.div`
  flex: none;
  display: flex;
  align-items: center;
  height: 34px;
  padding-left: 8px;
  background: #e6eaed;
`;
const BrowserTab = styled.div`
  position: relative;
  width: 240px;
  height: 34px;
  padding-left: 12px;
  display: flex;
  align-items: center;
  background: #fff;
  border-radius: 8px 8px 0 0;
  color: #5f6368;
  &::before, &::after {
    content: '';
    position: absolute;
    bottom: 0;
    width: 8px;
    height: 8px;
  }
  &::before { left: -8px; background: radial-gradient(circle at 0 0, transparent 8px, #fff 8px); }
  &::after { right: -8px; background: radial-gradient(circle at 100% 0, transparent 8px, #fff 8px); }
`;
const TabTitle = styled.div`
  width: 178px;
  margin-left: 8px;
  mask-image: linear-gradient(90deg, #000 160px, transparent 180px);
`;
const Omnibox = styled.div`
  width: 1607px;
  height: 29px;
  margin-left: 14px;
  padding: 0 10px 0 14px;
  display: flex;
  align-items: center;
  background: #f1f3f4;
  border-radius: 15px;
`;
const Bookmark = styled.div<{ $w: number }>`
  flex: none;
  width: ${(p) => p.$w}px;
  display: flex;
  align-items: center;
  color: #3c4043;
`;
const NavBar = styled.div`
  flex: none;
  display: flex;
  align-items: center;
  height: 51px;
  padding: 0 390px;
  background: #222;
  border-bottom: 1px solid #080808;
  font: 14px/20px ${WEB_FONT};
  color: #9d9d9d;
`;
const Brand = styled.div`font-size: 18px; margin-right: auto;`;
const NavLink = styled.div`margin-left: 30px;`;
const PageBody = styled.div`
  flex: 1;
  padding: 38px 390px 0;
  font: 14px/20px ${WEB_FONT};
  color: #333;
`;
const PageTitle = styled.h1`
  margin: 0 0 20px;
  height: 51px;
  font-size: 36px;
  font-weight: 400;
  line-height: 41px;
  letter-spacing: -0.22px;
  border-bottom: 1px solid #eee;
`;
const Breadcrumb = styled.div`
  display: flex;
  align-items: center;
  height: 36px;
  padding: 0 15px;
  border-radius: 4px;
  background: #f5f5f5;
  color: #777;
`;
const CrumbLink = styled.a`color: #337ab7;`;
const CrumbSlash = styled.span`color: #ccc; padding: 0 9px;`;
const Form = styled.div`
  margin: 20px 70px 0;
  display: flex;
  flex-direction: column;
  align-items: flex-start;
`;
const Intro = styled.p`margin: 0 0 10px;`;
const FieldName = styled.label`font-weight: 700; margin-bottom: 5px;`;
const Field = styled.div<{ $w: number; $mb: number; $c?: string }>`
  width: ${(p) => p.$w}px;
  height: 34px;
  margin-bottom: ${(p) => p.$mb}px;
  padding: 0 12px;
  display: flex;
  align-items: center;
  justify-content: space-between;
  border: 1px solid #ccc;
  border-radius: 4px;
  color: ${(p) => p.$c || '#333'};
`;
const Submit = styled.button`
  width: 135px;
  height: 34px;
  padding: 0;
  font: 14px/20px ${WEB_FONT};
  color: #fff;
  background: #337ab7;
  border: 1px solid #2e6da4;
  border-radius: 4px;
`;
const Footer = styled.div`
  margin: 70px 70px 0;
  padding-top: 20px;
  border-top: 1px solid #eee;
`;
const Shelf = styled.div`
  flex: none;
  display: flex;
  align-items: center;
  height: 55px;
  padding-left: 22px;
  border-top: 1px solid #d5d7da;
  color: #3c4043;
`;
const ShowAll = styled.div`
  margin-left: auto;
  width: 84px;
  height: 31px;
  display: flex;
  align-items: center;
  justify-content: center;
  border: 1px solid #dadce0;
  border-radius: 4px;
  color: #1a73e8;
`;

const UiFav = () => <svg width="16" height="16" viewBox="0 0 16 16"><path d="M1 1h14v14H1z" fill="#fff" stroke="#1386d0" strokeWidth="2" /><text x="2.500" y="12.500" fontFamily="Open Sans" fontWeight="700" fontSize="11" textLength="11" fill="#1386d0">Ui</text></svg>;
const Globe = () => <svg width="16" height="16" viewBox="0 0 16 16"><circle cx="8" cy="8" r="7.300" fill="#5f6368" /><path d="M3 6c2 0 3-2 5-3 2 0 2 1 1 2S6 6 6 7.500s4 0 5 1.500-1 3.500-3 4.500c0-2-1-3-2.500-3.500S3 8 3 6z" fill="#fff" /></svg>;
const textIcon = (t: string, fill: string, bg?: string, opts: { rx?: number; fs?: number; italic?: boolean } = {}) => (
  <svg width="16" height="16" viewBox="0 0 16 16">
    {bg && <rect width="16" height="16" rx={opts.rx || 0} fill={bg} />}
    <text x="8" y={8 + (opts.fs || 13) * 0.36} textAnchor="middle" fontFamily="Open Sans" fontWeight="800" fontStyle={opts.italic ? 'italic' : 'normal'} fontSize={opts.fs || 13} fill={fill}>{t}</text>
  </svg>
);
const Calendar = () => <svg width="16" height="16" viewBox="0 0 16 16"><path d="M0 0h16v16H0z" fill="#2b6fe8" /><path d="M12.500 3.500H16v9h-3.500z" fill="#fbbc04" /><path d="M3 12.500h9.500V16H3z" fill="#34a853" /><path d="M12.500 12.500H16L12.500 16z" fill="#ea4335" /><path d="M3 3.500h9.500v9H3z" fill="#fff" /><text x="7.700" y="10.500" textAnchor="middle" fontFamily="Open Sans" fontWeight="600" fontSize="7" fill="#2b6fe8">30</text></svg>;
const Hexa = () => <svg width="16" height="16" viewBox="0 0 16 16"><path d="M1 6.500L11.500.5 13 5C8 3 4 6 4 10z" fill="#10a8e0" /><path d="M15 9L4 15.500 3 11c5 2 9-1 9-5z" fill="#1e5fae" /><circle cx="8" cy="8" r="2.700" fill="#12a58c" /></svg>;
const YouTube = () => <svg width="16" height="12" viewBox="0 0 16 12"><rect width="16" height="12" rx="3" fill="#f00" /><path d="M6.300 3.500l4 2.500-4 2.500z" fill="#fff" /></svg>;
const GreySheet = () => <svg width="13" height="16" viewBox="0 0 13 16"><path d="M.5.5h8l4 4v11H.5z" fill="#e3e8ec" stroke="#eef0f2" /><path d="M8.500.5v4h4" fill="#fff" /></svg>;
const WebtoonW = () => <svg width="12" height="13" viewBox="0 0 12 13"><path d="M.5 1v8l2.500 3.500L6 10l3 2.500L11.500 9V1M4 1v7M8 1v7" fill="#1389fd" stroke="#1389fd" strokeWidth="1.500" /><path d="M4.200 1v7M7.800 1v7" stroke="#0a2d55" /></svg>;

const MARKS: [React.ReactNode, string, number, number, number][] = [
  [textIcon('UP', '#fff', '#0b3b91', { rx: 8, fs: 8, italic: true }), '75,094,000 BTC/KR...', 9, 112, 154],
  [textIcon('b', '#f58a1f', undefined, { fs: 18, italic: true }), 'No.1 가상자산 플...', 8, 102, 143],
  [<Calendar />, 'Google 캘린더 - 20...', 8, 113, 154],
  [<Hexa />, '4대사회보험 정보...', 8, 103, 144],
  [textIcon('K', '#fff', '#c4122f', { fs: 14 }), '한국에너지기술평...', 8, 105, 145],
  [textIcon('d', '#f26a1b', undefined, { fs: 18 }), '제이디텍(주)', 8, 67, 108],
  [<Globe />, '미리안', 9, 34, 76],
  [<YouTube />, 'YouTube', 8, 43, 83],
  [textIcon('8', '#fff', '#6708c9', { rx: 3, fs: 14 }), '8퍼센트', 8, 42, 84],
  [textIcon('K', '#ffce00', undefined, { fs: 16 }), 'kimp.ga - 김프 김...', 7, 105, 145],
  [<GreySheet />, '보라매 파크시티', 8, 86, 127],
  [<WebtoonW />, '121 ~ 130 - 초보...', 8, 103, 144],
  [<Globe />, 'Log Out', 8, 44, 84],
  [textIcon('k', '#1b9cc9', undefined, { fs: 16 }), 'Hello, Python | Kag...', 8, 112, 150],
];

const strokeIcon = (d: string, w = 14, h = 14, c = '#5f6368', sw = 1.6) => (
  <svg width={w} height={h} viewBox={`0 0 ${w} ${h}`} fill="none" stroke={c} strokeWidth={sw}><path d={d} /></svg>
);
const Bike = () => (
  <svg width="22" height="22" viewBox="0 0 22 22"><circle cx="11" cy="11" r="11" fill="#4285f4" /><g fill="none" stroke="#1f2a44" strokeWidth="1.300"><circle cx="6" cy="13" r="2.800" /><circle cx="16" cy="13" r="2.800" /></g><path d="M6 13l3-4.500h5l-3 4.500zM9 8.500L8 7M14 8.500V6.500h2M16 13l-2-4.500" fill="none" stroke="#f2634c" strokeWidth="1.200" /></svg>
);

function Browser() {
  return (
    <Window>
      <TabStrip>
        <BrowserTab>
          <UiFav />
          <TabTitle><Label w={178}>ACME System 1 - Download Mo</Label></TabTitle>
          <Slot $w={9} $ml={6}><Cross c="#5f6368" s={8} sw={1.9} /></Slot>
        </BrowserTab>
        <Slot $w={12} $ml={16}>{strokeIcon('M6 0v12M0 6h12', 12, 12, '#5f6368', 1.8)}</Slot>
        <CaptionButtons $gap={36} $pr={18}>
          <svg width="10" height="10" viewBox="0 0 10 10"><path d="M.5 2.500l4.500 5 4.500-5" fill="none" stroke="#888" /></svg>
          <Minimize /><Restore /><Cross />
        </CaptionButtons>
      </TabStrip>
      <Row $h={37} $pl={15}>
        {strokeIcon('M14 7H1.500M7.500 1L1.500 7l6 6', 14, 14, '#b7babd')}
        <Slot $w={14} $ml={18}>{strokeIcon('M0 7h12.500M6.500 1l6 6-6 6', 14, 14, '#b7babd')}</Slot>
        <Slot $w={14} $ml={18}><svg width="14" height="14" viewBox="0 0 14 14"><path d="M12 4A6 6 0 1 0 13 8" fill="none" stroke="#5f6368" strokeWidth="2" /><path d="M14 0v6H8z" fill="#5f6368" /></svg></Slot>
        <Slot $w={16} $ml={17}>{strokeIcon('M1 8l7-6.500L15 8M3.500 7v7.500h9V7', 16, 16, '#5f6368', 1.8)}</Slot>
        <Omnibox>
          <svg width="8" height="12" viewBox="0 0 8 12"><path d="M0 4.500h8V12H0z" fill="#5f6368" /><path d="M1.700 5V3a2.300 2.300 0 0 1 4.600 0v2" fill="none" stroke="#5f6368" strokeWidth="1.300" /></svg>
          <Label w={133} ml={12} c="#202124" fs={13}>acme-test.uipath.com</Label>
          <Label w={116} ml={1} c="#5f6368" fs={13}>/reports/download</Label>
          <Grow />
          <svg width="10" height="13" viewBox="0 0 10 13"><path d="M3.500 0h3v4.500H10L5 9.500 0 4.500h3.500zM0 11h10v1.500H0z" fill="#5f6368" /></svg>
          <Slot $w={15} $ml={19}><svg width="15" height="15" viewBox="0 0 15 15"><path d="M0 0h7l3 11H0z" fill="#5f6368" /><path d="M8.500 2.500h6v12H8l2-3" fill="none" stroke="#5f6368" /><path d="M9.500 6.500h4M11.500 5v1.500M13 7c-.5 2-2 3-3 3.500M10.500 7.500l3 3.500" stroke="#5f6368" fill="none" strokeWidth=".8" /><path d="M5.700 4A2 2 0 1 0 6 6H4.500" fill="none" stroke="#fff" /></svg></Slot>
          <Slot $w={16} $ml={17}>{strokeIcon('M.7 4.500v9.800h11.600v-3M4 11c0-4 2-6 6-6.200V1.700L15 6.300 10 11V8C7 8 5.500 9 4 11z', 16, 15, '#5f6368', 1.2)}</Slot>
          <Slot $w={15} $ml={16}>{strokeIcon('M7.500 1.500l1.800 4 4.400.4-3.300 3 1 4.300-3.900-2.300-3.900 2.300 1-4.300-3.300-3 4.400-.4z', 15, 15, '#5f6368', 1.3)}</Slot>
        </Omnibox>
        <Slot $w={16} $ml={15}>{textIcon('Ex', '#fff', '#f36b21', { rx: 3, fs: 9 })}</Slot>
        <Slot $w={15} $ml={17}><svg width="15" height="15" viewBox="0 0 15 15"><path d="M1 3.500h4a2 2 0 1 1 4 0h3.500v4a2 2 0 1 1 0 3.500v4H9a2 2 0 0 0-4 0H1v-4a2 2 0 0 0 0-3.700z" fill="#5f6368" /></svg></Slot>
        <Slot $w={14} $ml={17}><svg width="14" height="14" viewBox="0 0 14 14"><path d="M1 1h12v12H1z" fill="#fff" stroke="#5f6368" strokeWidth="2" /><path d="M8.500 1H13v12H8.500z" fill="#5f6368" /></svg></Slot>
        <Slot $w={22} $ml={14}><Bike /></Slot>
        <Slot $w={4} $ml={19}><svg width="4" height="14" viewBox="0 0 4 14" fill="#5f6368"><circle cx="2" cy="2" r="1.700" /><circle cx="2" cy="7" r="1.700" /><circle cx="2" cy="12" r="1.700" /></svg></Slot>
      </Row>
      <Row $h={32} $pl={14}>
        {MARKS.map(([icon, text, gap, w, total]) => (
          <Bookmark key={text} $w={total}><Slot $w={16}>{icon}</Slot><Label w={w} ml={gap} fs={12}>{text}</Label></Bookmark>
        ))}
        <Grow />
        <Slot $w={10}>{strokeIcon('M1 1l3 3-3 3M5 1l3 3-3 3', 9, 8, '#5f6368', 1.5)}</Slot>
        <Slot $w={18} />
      </Row>
      <Row $h={1} $bg="#d5dbdb" />
      <NavBar>
        <Brand>ACME System 1</Brand>
        <NavLink>Home</NavLink><NavLink>Switch to new theme</NavLink><NavLink>Log Out</NavLink>
      </NavBar>
      <PageBody>
        <PageTitle>Reports - Download Monthly Report</PageTitle>
        <Breadcrumb><CrumbLink>Home</CrumbLink><CrumbSlash>/</CrumbSlash><span>Reports - Download Monthly Report</span></Breadcrumb>
        <Form>
          <Intro>Please fill in the following form to be able to download a specific<br />Monthly Report.</Intro>
          <FieldName>Vendor TaxID:</FieldName>
          <Field $w={555} $mb={15} $c="#555">RO212121</Field>
          <FieldName>Month:</FieldName>
          <Field $w={220} $mb={10}>February<Triangle w={8} c="#333" /></Field>
          <FieldName>Year:</FieldName>
          <Field $w={220} $mb={15}>2021<Triangle w={8} c="#333" /></Field>
          <Submit>Download Report</Submit>
        </Form>
        <Footer>Copyright © 2022 ACME Systems</Footer>
      </PageBody>
      <Shelf>
        <Sheet />
        <Label w={136} ml={15} fs={13}>Report-RO212121....csv</Label>
        <Slot $w={10} $ml={23}><Chevron dir="up" s={10} c="#5f6368" sw={1.8} /></Slot>
        <Divider $h={42} $ml={18} $c="#d0d2d5" />
        <ShowAll><Label w={51}>모두 표시</Label></ShowAll>
        <Slot $w={10} $ml={13}><Cross c="#5f6368" sw={1.8} /></Slot>
        <Slot $w={13} />
      </Shelf>
    </Window>
  );
}

/* ---------- save-as dialog ---------- */

const Dialog = styled.div`
  position: absolute;
  left: 856px;
  top: 275px;
  width: 946px;
  height: 528px;
  display: flex;
  flex-direction: column;
  background: #fff;
  border: 1px solid #6b6d6f;
  color: #000;
`;
const ToolRow = styled.div`
  flex: none;
  display: flex;
  align-items: center;
  height: 31px;
  padding-left: 18px;
  background: #f4f6f8;
  border-bottom: 1px solid #e6e7e8;
  color: #1e395b;
`;
const Panes = styled.div`
  flex: none;
  display: flex;
  height: 306px;
`;
const Tree = styled.div`
  width: 140px;
  padding-right: 1px;
`;
const TreeRow = styled.div<{ $pl: number; $on?: boolean; $gap?: number }>`
  display: flex;
  align-items: center;
  height: 24px;
  margin-bottom: ${(p) => p.$gap || 0}px;
  padding-left: ${(p) => p.$pl}px;
  background: ${(p) => (p.$on ? '#d9d9d9' : 'transparent')};
`;
const Scroll = styled.div`
  width: 16px;
  padding: 5px 0;
  display: flex;
  flex-direction: column;
  align-items: center;
  background: #f0f0f0;
`;
const Thumb = styled.div`
  width: 15px;
  height: 168px;
  margin: 90px 1px auto 0;
  background: #cdcdcd;
`;
const FilePane = styled.div`
  flex: 1;
  margin-left: 2px;
  border-left: 1px solid #f3f3f3;
`;
const Bottom = styled.div`
  flex: 1;
  padding: 11px 5px 0 0;
  background: #f0f0f0;
`;
const ComboRow = styled.div`
  display: flex;
  align-items: center;
  height: 23px;
  margin-bottom: 2px;
`;
const Combo = styled.div<{ $focus?: boolean }>`
  flex: 1;
  height: 23px;
  margin-left: 5px;
  padding: 0 4px 0 3px;
  display: flex;
  align-items: center;
  justify-content: space-between;
  background: ${(p) => (p.$focus ? '#fff' : '#e1e1e1')};
  border: 1px solid ${(p) => (p.$focus ? '#0078d7' : '#adadad')};
`;
const Selected = styled.div`
  height: 15px;
  line-height: 15px;
  background: #0078d7;
  color: #fff;
`;
const ActionRow = styled.div`
  display: flex;
  align-items: center;
  height: 24px;
  margin-top: 21px;
  padding: 0 13px;
`;
const ActionButton = styled.div<{ $main?: boolean; $ml: number | 'auto' }>`
  width: 86px;
  height: 24px;
  margin-left: ${(p) => (p.$ml === 'auto' ? 'auto' : p.$ml + 'px')};
  display: flex;
  align-items: center;
  justify-content: center;
  background: ${(p) => (p.$main ? '#e5f1fb' : '#e1e1e1')};
  border: 1px solid ${(p) => (p.$main ? '#0078d7' : '#adadad')};
`;
const Grip = styled.div`
  display: flex;
  justify-content: flex-end;
  margin-right: -2px;
  padding-top: 1px;
`;

const Monitor16 = () => <svg width="16" height="15" viewBox="0 0 16 14"><path d="M.5.5h15v10H.5z" fill="#2fb3f5" stroke="#4b87ac" /><path d="M15 1v9H4z" fill="#1e97e0" /><path d="M3 13.300h10" stroke="#8aa4b5" strokeWidth="1.400" /></svg>;
const Cube = () => <svg width="16" height="16" viewBox="0 0 16 16"><path d="M0 2.500L8 0l8 2.500L8 5z" fill="#7fdcee" /><path d="M0 2.500L8 5v11l-8-3.500z" fill="#27b4d3" /><path d="M16 2.500L8 5v11l8-3.500z" fill="#1491b3" /><path d="M4 6l4-1v6l-4 2z" fill="#c7eef6" /></svg>;
const DesktopIcon = () => <svg width="16" height="12" viewBox="0 0 16 12"><path d="M.5.5h15v11H.5z" fill="#1ba1f2" stroke="#1377c4" /><path d="M2 10.500h1M4 10.500h1M12 10.500h2" stroke="#fff" /></svg>;
const Down = () => <svg width="16" height="16" viewBox="0 0 16 16"><path d="M5 0h6v8h5l-8 8-8-8h5z" fill="#2e8fe0" /></svg>;
const Film = () => <svg width="14" height="15" viewBox="0 0 14 14" preserveAspectRatio="none"><path d="M0 0h14v14H0z" fill="#474747" /><path d="M1.500 0v14M12.500 0v14" stroke="#ddd" strokeDasharray="1.500 1.500" /><path d="M3.500 1h7v5.500h-7z" fill="#4b7fd6" /><path d="M3.500 7.500h7V13h-7z" fill="#3a64b8" /><path d="M4 6l4-4 2 4zM5 13l3-4 2 4z" fill="#d79a36" /></svg>;
const DocIcon = () => <svg width="12" height="16" viewBox="0 0 12 15" preserveAspectRatio="none"><path d="M.5.5h8l3 3v11H.5z" fill="#fff" stroke="#8a8a8a" /><path d="M2 4.500h4M2 7h8M2 9.500h8M2 12h8" stroke="#2d8ad6" /></svg>;
const Note = () => <svg width="12" height="16" viewBox="0 0 12 15" preserveAspectRatio="none"><path d="M5.500 0c0 3 6 4 5.500 9-1-2.500-2.500-3-4-3.500V12a3.300 2.800 0 1 1-1.500-2.500z" fill="#1494ea" /></svg>;
const Drive = ({ win }: { win?: boolean }) => (
  <svg width="15" height="13" viewBox="0 0 15 13">
    {win && <path d="M0 0h2.700v2.700H0zM3.300 0H6v2.700H3.300zM0 3.300h2.700V6H0zM3.300 3.300H6V6H3.300z" fill="#19b5f0" />}
    <path d="M3 5.500h9.500l2 3H1z" fill="#cfd2d6" /><path d="M1 8.500h13.500V12H1z" fill="#3f4245" /><path d="M10.500 10.300h2" stroke="#46e546" strokeWidth="1.300" />
  </svg>
);

const TREE: [React.ReactNode, string, number, boolean?][] = [
  [<Cube />, '3D 개체', 44], [<DesktopIcon />, 'Desktop', 44], [<Down />, '다운로드', 47], [<Film />, '동영상', 35],
  [<DocIcon />, '문서', 23], [<Picture />, '사진', 23], [<Note />, '음악', 23],
  [<Drive win />, '로컬 디스크 (C:)', 85, true], [<Drive />, 'HDD (D:)', 50], [<Drive />, '로컬 디스크 (F:)', 84],
];

function SaveDialog() {
  return (
    <Dialog>
      <Row $h={28} $pl={9}>
        <ChromeLogo s={14} />
        <Label w={102} ml={8}>다른 이름으로 저장</Label>
        <CaptionButtons $gap={0} $pr={10}><Cross c="#111" s={11} /></CaptionButtons>
      </Row>
      <AddressBar
        h={44} boxW={612} boxH={30} reloadW={34} elided dim
        crumbs={[['로컬 디스크 (C:)', 85, 23], ['RPA', 22, 24], ['KS_연도별_보고서작성', 119, 23], ['SourceData', 62, 24], ['RO212121', 57, 23]]}
        searchW={202} search="RO212121 검색" searchTextW={85}
      />
      <ToolRow>
        <Label w={23}>구성</Label>
        <Slot $w={7} $ml={7}><Triangle c="#1e395b" w={7} /></Slot>
        <Label w={38} ml={32}>새 폴더</Label>
        <Grow />
        <Details />
        <Slot $w={7} $ml={10}><Triangle c="#1e395b" w={7} /></Slot>
        <Slot $w={16} $ml={30}><Help /></Slot>
        <Slot $w={15} />
      </ToolRow>
      <Panes>
        <Tree>
          <TreeRow $pl={34} $gap={8}><Folder /><Label w={61} ml={7}>SourceData</Label></TreeRow>
          <TreeRow $pl={24}><Monitor16 /><Label w={30} ml={6}>내 PC</Label></TreeRow>
          {TREE.map(([icon, text, w, on]) => (
            <TreeRow key={text} $pl={32} $on={on}><Slot $w={16}>{icon}</Slot><Label w={w} ml={6}>{text}</Label></TreeRow>
          ))}
        </Tree>
        <Scroll><Chevron dir="up" s={8} c="#505050" sw={2} /><Thumb /><Chevron s={8} c="#505050" sw={2} /></Scroll>
        <FilePane>
          <HeaderRow $h={25}>
            <HeaderCell $w={273} $pl={19}><SortMark $x={139}><Chevron dir="up" s={9} sw={1} /></SortMark><Label w={23}>이름</Label></HeaderCell>
            <HeaderCell $w={144} $pl={7}><Label w={64}>수정한 날짜</Label></HeaderCell>
            <HeaderCell $w={120} $pl={7}><Label w={23}>유형</Label></HeaderCell>
            <HeaderCell $w={80} $pl={7}><Label w={23}>크기</Label></HeaderCell>
          </HeaderRow>
          <Row $h={6} />
          <FileRow>
            <Cell $w={280} $pl={21}><Sheet /><Label w={196} ml={7} c="#000">Report-RO212121-2021-January.csv</Label></Cell>
            <Cell $w={144}><Label w={121}>2022-08-30 오후 9:30</Label></Cell>
            <Cell $w={120}><Label w={102}>Comma Separate...</Label></Cell>
            <Cell $w={64} $right><Label w={20}>1KB</Label></Cell>
          </FileRow>
        </FilePane>
      </Panes>
      <Bottom>
        <ComboRow>
          <Label w={72} ml={48} fs={12}>파일 이름(<u>N</u>):</Label>
          <Combo $focus><Selected><Label w={131}>Report-RO212121-2.csv</Label></Selected><Chevron s={9} c="#555" sw={1.3} /></Combo>
        </ComboRow>
        <ComboRow>
          <Label w={69} ml={51} fs={12}>파일 형식(<u>T</u>):</Label>
          <Combo><Label w={88}>CSV 파일 (*.csv)</Label><Chevron s={9} c="#555" sw={1.3} /></Combo>
        </ComboRow>
        <ActionRow>
          <Slot $w={10} $mt={6}><Chevron dir="up" s={10} c="#555" sw={2} /></Slot>
          <Slot $w={62} $ml={8} $mt={6}><Label w={62}>폴더 숨기기</Label></Slot>
          <ActionButton $main $ml="auto"><Label w={38}>저장(<u>S</u>)</Label></ActionButton>
          <ActionButton $ml={14}><Label w={23}>취소</Label></ActionButton>
        </ActionRow>
        <Grip><svg width="8" height="8" viewBox="0 0 8 8" fill="#bfbfbf"><path d="M6 0h2v2H6zM3 3h2v2H3zM6 3h2v2H6zM0 6h2v2H0zM3 6h2v2H3zM6 6h2v2H6z" /></svg></Grip>
      </Bottom>
    </Dialog>
  );
}

export default function App() {
  return (
    <Screen>
      <GlobalStyle />
      <Monitor><Explorer /><Taskbar /></Monitor>
      <Monitor><Browser /><Taskbar tray /><SaveDialog /></Monitor>
    </Screen>
  );
}
